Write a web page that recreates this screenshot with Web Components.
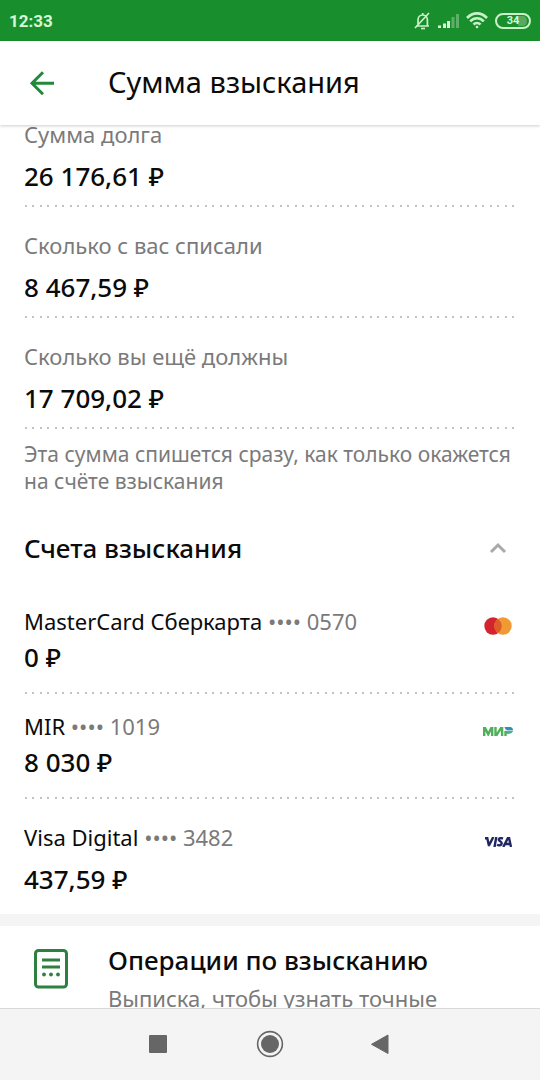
<!DOCTYPE html>
<html lang="ru">
<head>
<meta charset="utf-8">
<meta name="viewport" content="width=device-width, initial-scale=1">
<title>Сумма взыскания</title>
<style>
  html, body { margin: 0; height: 100%; }
  body { font-family: "Noto Sans", "Open Sans", sans-serif; color: #0b0b0b; background: #fff; }
</style>
</head>
<body>
<debt-screen></debt-screen>
<script>
const define = (name, html, setup) => {
  const template = document.createElement('template');
  template.innerHTML = '<style>*{box-sizing:border-box}button{font:inherit;color:inherit;background:none;border:0;padding:0;margin:0;cursor:pointer}svg{display:block;flex:none}</style>' + html;
  customElements.define(name, class extends HTMLElement {
    constructor() {
      super();
      this.attachShadow({ mode: 'open' }).append(template.content.cloneNode(true));
    }
    connectedCallback() { if (setup) setup(this, this.shadowRoot); }
  });
};

define('status-bar', `
<style>
  :host { display: flex; align-items: center; justify-content: space-between; height: 41px; padding: 0 9px; background: #188f2c; color: #d6f8d6; flex: none; }
  time { font: 700 17px/20px Roboto, sans-serif; }
  .icons { display: flex; align-items: center; gap: 7px; }
  .battery { display: flex; align-items: center; justify-content: center; width: 36px; height: 16px; border: 2px solid #c9f2c9; border-radius: 8px; font: 700 11px/12px Roboto, sans-serif; background: linear-gradient(90deg, transparent 67%, #58a95f 67%) content-box; padding: 1px 2px; }
</style>
<time>12:33</time>
<div class="icons">
  <svg width="17" height="18" viewBox="0 0 17 18" fill="none" stroke="#c9f2c9" stroke-width="1.7" aria-label="Без звука"><path d="M2 14h13M4 14V8c0-3 2-5 4.700-5s4.700 2 4.700 5v6M8.700 1v2M1 16 15 1"/><path d="M7 16.500h4"/></svg>
  <svg width="21" height="16" viewBox="0 0 21 16" aria-label="Сигнал"><g fill="#d6f8d6"><path d="M0 12.500h3V15H0zM5 10.500h3V15H5zM9 8h3v7H9z"/></g><g fill="#5eb068"><path d="M13.500 4h3v11h-3zM18 1h3v14h-3z"/></g></svg>
  <svg width="22" height="17" viewBox="0 0 22 17" fill="none" stroke="#c9f2c9" stroke-width="2.600" aria-label="Wi-Fi"><path d="M1 6C7-.2 15-.2 21 6M4.200 9.300c4-4 9.600-4 13.600 0M7.500 12.500c2-2 5-2 7 0"/><circle cx="11" cy="15" r="1.300" fill="#c9f2c9" stroke="none"/></svg>
  <div class="battery">34</div>
</div>`);

define('app-bar', `
<style>
  :host { display: flex; align-items: center; height: 84px; padding: 0 24px 0 28px; background: #fff; box-shadow: 0 1px 3px #0003; position: relative; z-index: 1; flex: none; }
  button { width: 28px; height: 28px; margin-right: 52px; }
  h1 { margin: 0; padding-bottom: 2px; font-size: 29px; line-height: 36px; font-weight: 400; white-space: nowrap; }
</style>
<button type="button" aria-label="Назад"><svg width="28" height="28" viewBox="0 0 28 28" fill="none" stroke="#23893a" stroke-width="3"><path d="M26 14.300H4M15 3.300l-11 11 11 11"/></svg></button>
<h1><slot></slot></h1>`);

const dots = 'background: linear-gradient(90deg, #c2c2c2 2px, transparent 2px 7px, #c2c2c2 7px 9px, transparent 9px) 1px 100% / 15px 2px repeat-x;';

define('debt-amount', `
<style>
  :host { display: block; padding: 29px 0 15px; ${dots} }
  :host([first]) { padding-top: 0; }
  dl, dd { margin: 0; }
  dt { font-size: 22px; line-height: 18px; color: #7a7a7a; }
  dd { margin-top: 17px; font-size: 26px; line-height: 32px; font-weight: 500; }
</style>
<dl><dt><slot name="label"></slot></dt><dd><slot></slot></dd></dl>`);

define('card-account', `
<style>
  :host { display: flex; justify-content: space-between; padding: 18px 0 21px; ${dots} }
  :host([last]) { padding: 24px 0 19px; background: none; }
  .name { font-size: 22px; line-height: 28px; }
  .mask { color: #7a7a7a; }
  .sum { margin-top: 6px; font-size: 26px; line-height: 32px; font-weight: 500; }
  :host([last]) .sum { margin-top: 12px; }
  .logo { display: flex; align-items: center; justify-content: center; width: 32px; height: 38px; margin-right: 2px; }
</style>
<div>
  <div class="name"><slot name="name"></slot> <span class="mask">•••• <slot name="number"></slot></span></div>
  <div class="sum"><slot></slot></div>
</div>
<div class="logo"><slot name="logo"></slot></div>`);

define('accounts-section', `
<style>
  :host { display: block; margin-top: 37px; }
  button { display: flex; width: 100%; align-items: center; justify-content: space-between; text-align: left; font-size: 26px; line-height: 32px; font-weight: 500; padding-right: 9px; }
  .list { padding-top: 25px; }
</style>
<button type="button" aria-expanded="true"><slot name="title"></slot>
<svg width="18" height="14" viewBox="0 0 18 14" fill="none" stroke="#a9a9a9" stroke-width="3"><path d="M2 11l7-7 7 7"/></svg></button>
<div class="list"><slot></slot></div>`, (host, root) => {
  const button = root.querySelector('button'), list = root.querySelector('.list');
  button.onclick = () => {
    list.hidden = !list.hidden;
    button.setAttribute('aria-expanded', String(!list.hidden));
  };
});

define('operations-link', `
<style>
  :host { display: block; border-top: 12px solid #f4f4f4; }
  a { display: flex; padding: 18px 24px 18px 34px; color: inherit; text-decoration: none; }
  svg { margin: 5px 40px 0 0; }
  .title { font-size: 26px; line-height: 32px; font-weight: 500; }
  .hint { margin-top: 8px; font-size: 22px; line-height: 28px; color: #7a7a7a; }
</style>
<a href="#operations">
<svg width="34" height="40" viewBox="0 0 34 40" fill="none" stroke="#2f8040" stroke-width="3"><rect x="1.500" y="1.500" width="31" height="36.500" rx="3"/><path d="M8 11h18M8 18h18"/><g fill="#2f8040" stroke="none"><circle cx="10" cy="25.500" r="1.900"/><circle cx="17" cy="25.500" r="1.900"/><circle cx="24" cy="25.500" r="1.900"/></g></svg>
<div><div class="title"><slot></slot></div><div class="hint"><slot name="hint"></slot></div></div>
</a>`);

define('system-nav', `
<style>
  :host { display: flex; align-items: center; justify-content: center; gap: 83px; height: 72px; padding-bottom: 2px; background: #f4f4f4; border-top: 1px solid #d9d9d9; flex: none; }
  button { width: 28px; height: 28px; }
</style>
<button type="button" aria-label="Недавние"><svg width="28" height="28" viewBox="0 0 28 28"><rect x="4" y="5" width="18" height="18" rx="1" fill="#666"/></svg></button>
<button type="button" aria-label="Домой"><svg width="28" height="28" viewBox="0 0 28 28"><circle cx="14" cy="14" r="12.400" fill="none" stroke="#666" stroke-width="1.600"/><circle cx="14" cy="14" r="9" fill="#666"/></svg></button>
<button type="button" aria-label="Назад"><svg width="28" height="28" viewBox="0 0 28 28"><path d="M21 5v18.500L4.500 14.300z" fill="#666" stroke="#666" stroke-linejoin="round"/></svg></button>`);

define('debt-screen', `
<style>
  :host { display: flex; flex-direction: column; height: 100vh; }
  main { flex: 1; min-height: 0; overflow: hidden auto; scrollbar-width: none; }
  .body { padding: 0 24px; }
  .note { margin: 12px 0 0; font-size: 21px; line-height: 27px; color: #7a7a7a; }
</style>
<status-bar></status-bar>
<app-bar>Сумма взыскания</app-bar>
<main>
  <div class="body">
    <debt-amount first><span slot="label">Сумма долга</span>26 176,61 ₽</debt-amount>
    <debt-amount><span slot="label">Сколько с вас списали</span>8 467,59 ₽</debt-amount>
    <debt-amount><span slot="label">Сколько вы ещё должны</span>17 709,02 ₽</debt-amount>
    <p class="note">Эта сумма спишется сразу, как только окажется на счёте взыскания</p>
    <accounts-section>
      <span slot="title">Счета взыскания</span>
      <card-account><span slot="name">MasterCard Сберкарта</span><span slot="number">0570</span>0 ₽
        <svg slot="logo" width="28" height="18" viewBox="0 0 28 18" aria-label="Mastercard"><circle cx="9" cy="9" r="8.700" fill="#d2232e"/><circle cx="19" cy="9" r="8.700" fill="#ef9a32"/><path d="M14 1.900a8.700 8.700 0 0 1 0 14.200a8.700 8.700 0 0 1 0-14.200z" fill="#df5b28"/></svg>
      </card-account>
      <card-account><span slot="name">MIR</span><span slot="number">1019</span>8 030 ₽
        <svg slot="logo" width="30" height="9" viewBox="0 0 30 9" aria-label="МИР"><g fill="none" stroke="#4faf5b" stroke-width="2.400"><path d="M1.200 9V1.200h1l3 6 3-6h1V9M12.500 0v7.800h1.200l4.200-6.600h1.200V9M22.500 4v5M21.500 5.600h5"/></g><path d="M21.500 0H27c2 0 3 1.500 3 3.200h-5c-1.700 0-3-1-3.500-3.200z" fill="#2b8fc2"/><path d="M22 3.800h8c-.4 1.700-1.500 2.700-3 2.700h-5z" fill="#4faf8b"/></svg>
      </card-account>
      <card-account last><span slot="name">Visa Digital</span><span slot="number">3482</span>437,59 ₽
        <svg slot="logo" width="28" height="10" viewBox="0 0 28 10" aria-label="Visa"><g fill="none" stroke="#20265f" stroke-width="2.400"><path d="M1 1.200h2.300L5 9M4.700 9 9.300 0M12.300 0 10.500 10M19 1.600c-2-.8-4-.6-4.200 1-.2 1.700 3.200 1.800 2.900 3.900-.3 2-2.800 2.300-4.700 1.300M19.300 10l4.500-8.800h1.300L27 10M21.500 7H26"/></g></svg>
      </card-account>
    </accounts-section>
  </div>
  <operations-link>Операции по взысканию<span slot="hint">Выписка, чтобы узнать точные</span></operations-link>
</main>
<system-nav></system-nav>`);
</script>
</body>
</html>
